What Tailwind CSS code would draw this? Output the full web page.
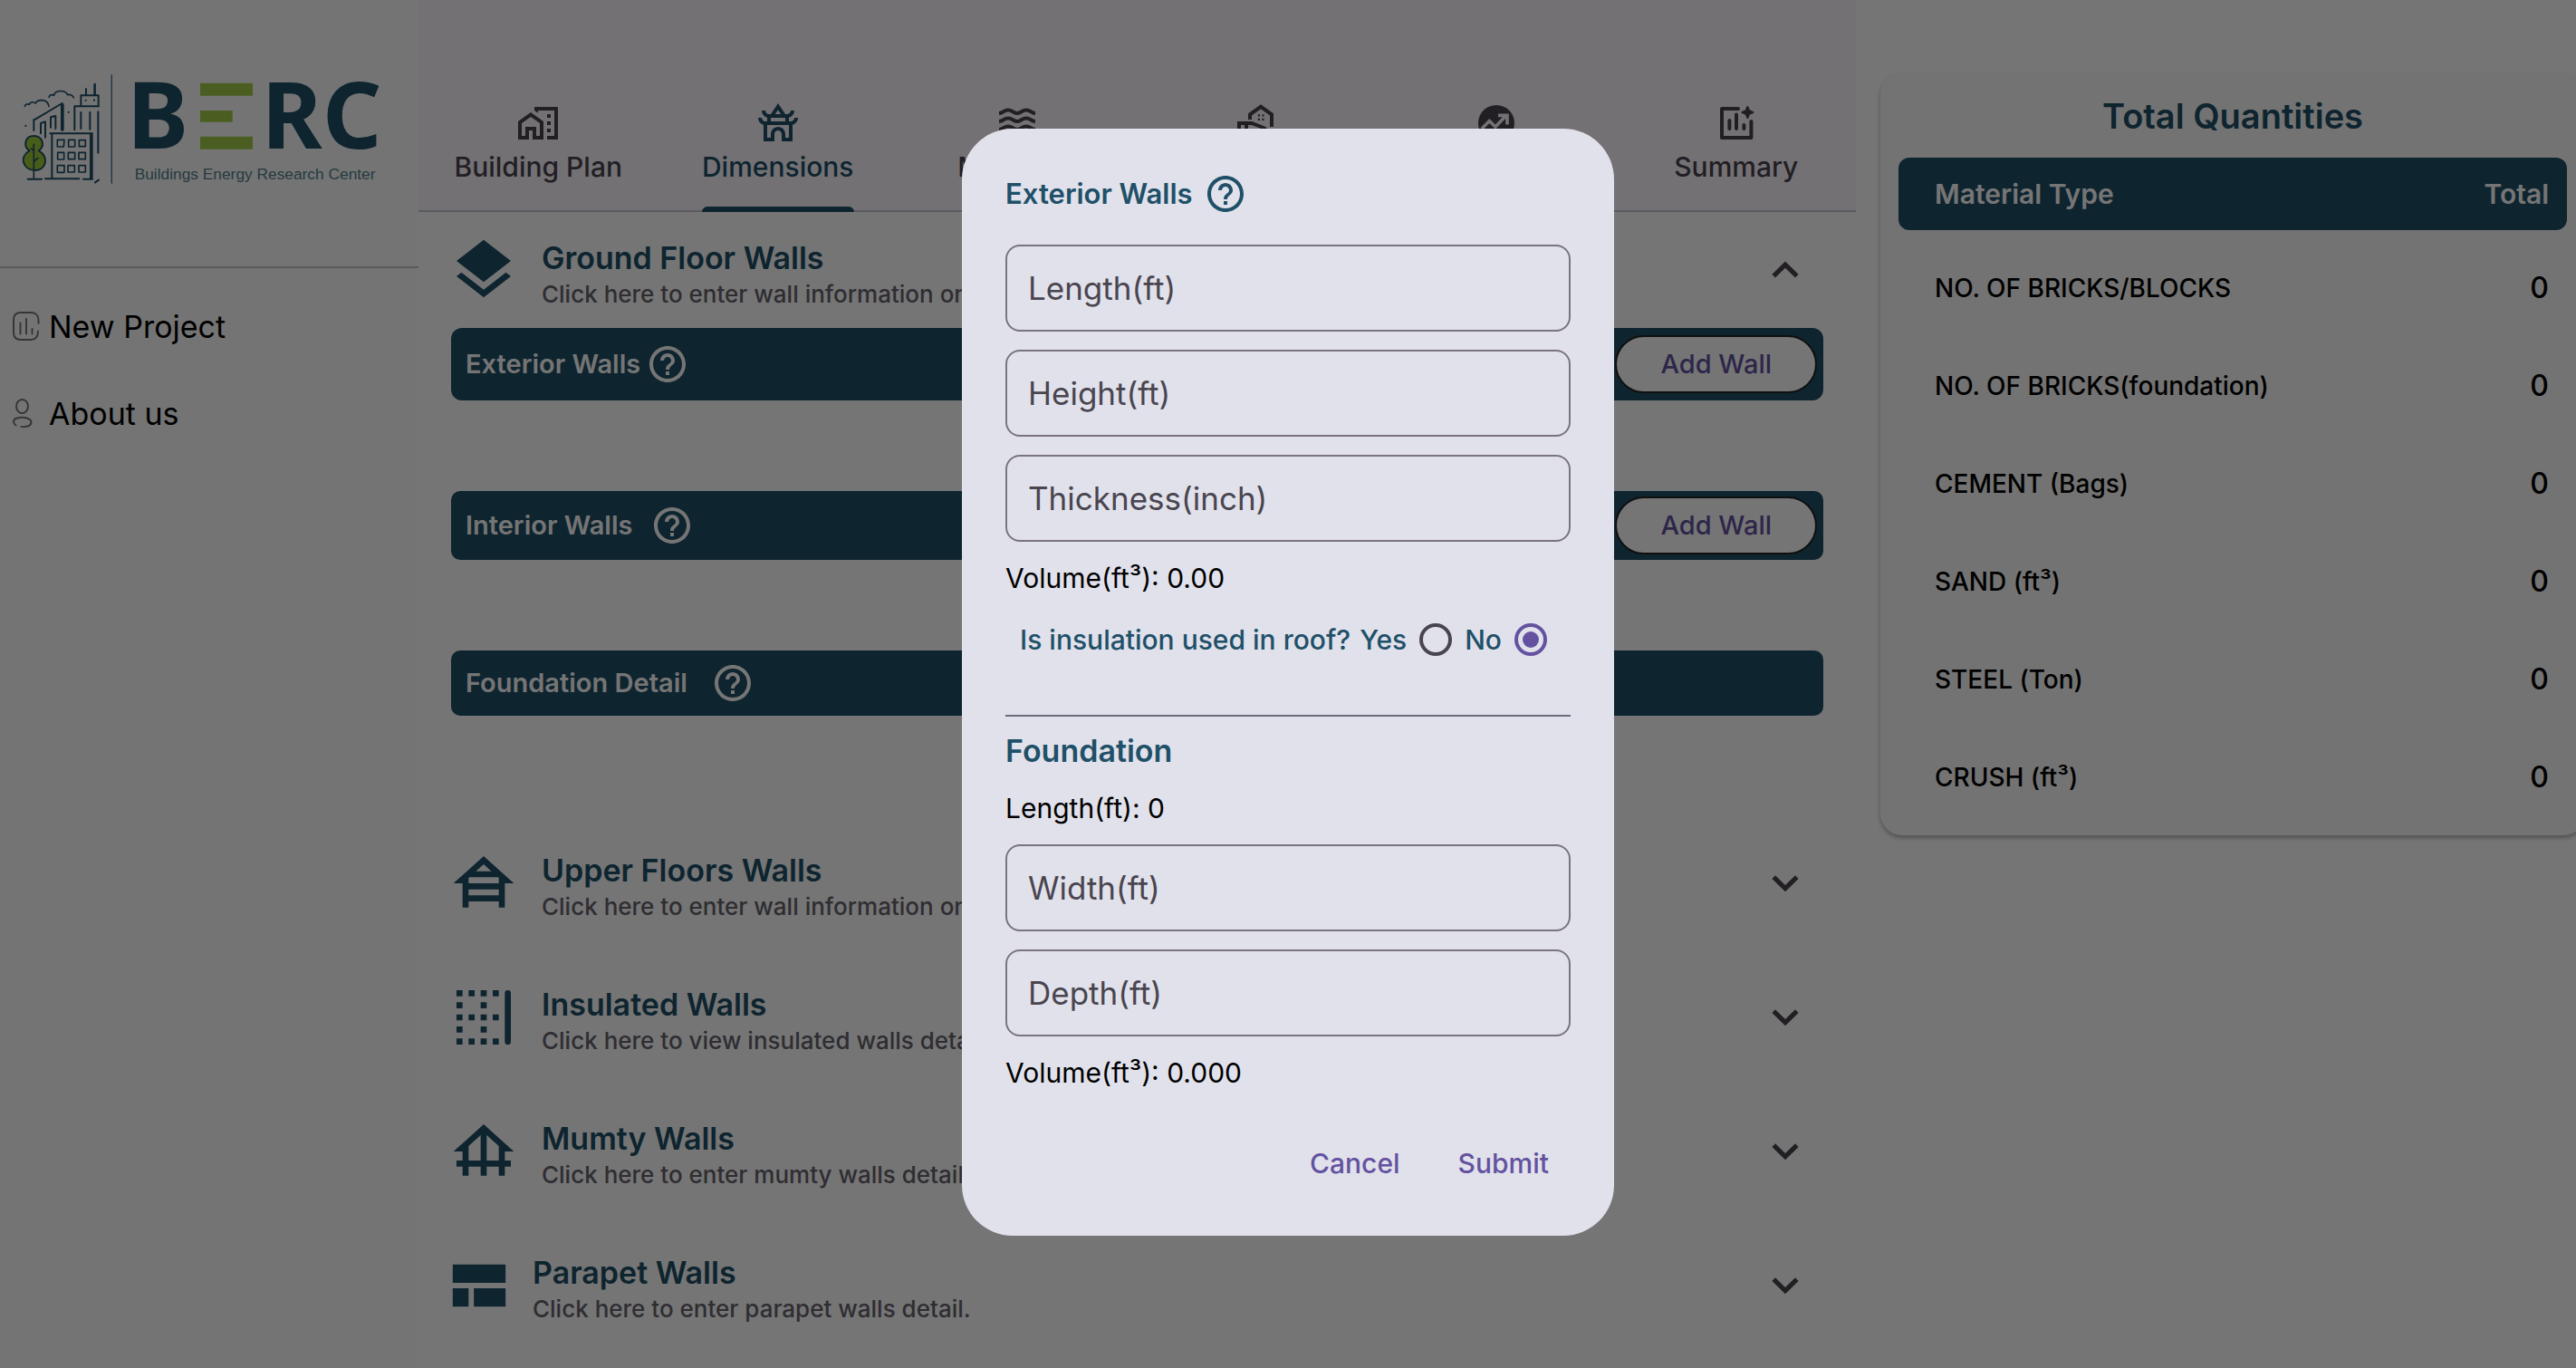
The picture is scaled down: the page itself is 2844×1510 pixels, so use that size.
<!DOCTYPE html>
<html lang="en">
<head>
<meta charset="utf-8">
<title>BERC - Dimensions</title>
<script src="https://cdn.jsdelivr.net/npm/@tailwindcss/browser@4"></script>
</head>
<body class="h-screen overflow-hidden bg-white font-['Inter','Open_Sans',sans-serif] text-black">

<svg class="hidden" aria-hidden="true">
  <symbol id="help" viewBox="0 0 24 24"><path d="M11 18h2v-2h-2v2zm1-16C6.480 2 2 6.480 2 12s4.480 10 10 10 10-4.480 10-10S17.520 2 12 2zm0 18c-4.410 0-8-3.590-8-8s3.590-8 8-8 8 3.590 8 8-3.590 8-8 8zm0-14c-2.210 0-4 1.790-4 4h2c0-1.100.9-2 2-2s2 .9 2 2c0 2-3 1.750-3 5h2c0-2.250 3-2.500 3-5 0-2.210-1.790-4-4-4z"/></symbol>
  <symbol id="down" viewBox="0 0 24 24"><path d="M5.600 8.600 12 14.800l6.400-6.200" fill="none" stroke="currentColor" stroke-width="2.600"/></symbol>
  <symbol id="up" viewBox="0 0 24 24"><path d="M5.600 15.300 12 9.100l6.400 6.200" fill="none" stroke="currentColor" stroke-width="2.600"/></symbol>
</svg>

<div class="flex h-screen">

  <!-- Sidebar -->
  <aside class="w-[462px] shrink-0 bg-[#fdfdfd]">
    <div class="h-[296px] border-b-2 border-[#cac4d0] pt-20">
      <svg class="h-[125px] w-[430px]" viewBox="0 60 1290 375" role="img" aria-label="BERC Buildings Energy Research Center">
        <g fill="none" stroke="#205068" stroke-width="6" stroke-linecap="round" stroke-linejoin="round">
          <path d="M82 172c2-8 9-9 15-6 3-9 14-10 20-4 8-14 40-16 45 10M162 142c3-9 10-10 16-6 6-20 40-18 46-2 8-3 18 2 20 9" stroke-width="5"/>
          <path d="M112 252V218L206 162V252M112 218v-2M204 166v84M209 166v84"/>
          <path d="M135 262v-34l15-5v52M168 242v-34l16-4v42"/>
          <path d="M247 250V172h80M268 170v-34h58v34M285 132v-18M313 134V100M268 192v54M298 192v56M325 190v136"/>
          <path d="M315 98v36" stroke-width="5"/>
          <path d="M172 408V262h133v150M166 262h140M300 266v144M305 266v144M92 413h46M150 412h112M276 413h30M315 424l12-8"/>
          <path d="M190 283h23l-2 23h-21zM227 283h21v23h-21zM262 284h21v21h-21zM191 325h21v23h-21zM226 325h22v22h-22zM261 325h22v22h-22zM190 368h23v23h-23zM225 368h22v22h-22zM261 368h22v22h-22z" stroke-width="5"/>
          <path d="M85 236v1M227 191v1M284 152v1M312 151v1"/>
          <path d="M98 319c-24-16-14-49 14-49s40 33 16 49c34 16 28 65-12 65s-54-46-18-65z" fill="#9fcb3b"/>
          <path d="M112 412V298M112 320l-8-8M112 355l14-12" stroke-width="5"/>
          <path d="M370 68v358" stroke-width="4" stroke="#3d7288"/>
        </g>
        <g fill="#205068" font-family="'Noto Sans','Open Sans',sans-serif" font-weight="700" font-size="306">
          <text x="421" y="311">B</text><text x="866" y="311">R</text><text x="1068" y="311">C</text>
        </g>
        <path d="M663 95h174v42H663zM663 186h107v38H663zM663 272h174v42H663z" fill="#a3cd4b"/>
        <text x="446" y="414" fill="#52808c" font-family="'Liberation Sans',sans-serif" font-size="52">Buildings Energy Research Center</text>
      </svg>
    </div>
    <nav class="mt-4 text-[34px]">
      <a href="#" class="flex h-24 items-center gap-[10px] pl-[14px]">
        <svg class="h-8 w-[30px]" viewBox="0 0 30 32" fill="none" stroke="#777" stroke-width="2" stroke-linecap="round"><path d="M28 21.500c0 6-3 9.500-8 9.500H9c-5 0-8-3-8-8V9c0-5 3-8 8-8h11c5 0 8.500 3 8.500 8v4M8.500 12.500v12M15 8v16.500M21.500 19v5.500"/></svg>New Project</a>
      <a href="#" class="flex h-24 items-center gap-[10px] pl-[14px]">
        <svg class="h-8 w-[30px]" viewBox="0 0 30 32" fill="none" stroke="#777" stroke-width="2" stroke-linecap="round"><ellipse cx="7.500" cy="8.500" rx="6.500" ry="7.500" transform="translate(3)"/><path d="M3.500 29.500C0 27 0 22.500 5 21.500c4-1 8-1 12 .5 5 2 4.500 7-.5 8.500-2 .6-5 .8-7 .5"/></svg>About us</a>
    </nav>
  </aside>

  <!-- Main column -->
  <main class="min-w-0 flex-1">
    <nav class="grid h-[234px] grid-cols-6 border-b-2 border-[#cac4d0] bg-[#fdf7fe] text-[30px] leading-10 font-medium text-[#49454f]">
      <button class="flex flex-col items-center justify-end gap-1 pb-7">
        <svg class="size-12" viewBox="0 0 24 24" fill="currentColor"><path fill-rule="evenodd" d="M1 11v10h6v-5h2v5h6V11L8 6zM13 19h-2v-5H5v5H3v-7l5-3.500 5 3.500zM17 7h2v2h-2zM17 11h2v2h-2zM17 15h2v2h-2zM10 3v1.970l2 1.430V5h9v14h-4v2h6V3z"/></svg>
        Building Plan</button>
      <button class="flex justify-center text-[#205068]">
        <span class="relative -mb-[2px] flex h-[234px] flex-col items-center justify-end gap-1 pb-[30px]">
          <svg class="size-12" viewBox="0 0 24 24" fill="currentColor"><path fill-rule="evenodd" d="M21 9.020c0 1.090-.89 1.980-1.980 1.980H4.980C3.890 11 3 10.110 3 9.020H1c0 1.860 1.280 3.400 3 3.840V22h6v-4c0-1.100.9-2 2-2s2 .9 2 2v4h6v-9.140c.55-.14 3-1.040 3-3.860zM6 13v7h2v-2c0-2.200 1.800-4 4-4s4 1.800 4 4v2h2v-7zM6 8.860V11h12V8.860c.55-.14 3-1.040 3-3.860l-2 .02C19 6.110 18.110 7 17.020 7h-1.030L12 1 8.020 7H6.980C5.890 7 5 6.110 5 5.020H3c0 1.860 1.280 3.400 3 3.840zM8 9h8v2H8zM12 4.600 13.600 7h-3.200z"/></svg>
          Dimensions
          <span class="absolute inset-x-0 bottom-0 h-[6px] rounded-t-[6px] bg-[#205068]"></span>
        </span></button>
      <button class="flex flex-col items-center justify-end gap-1 pb-7">
        <svg class="size-12" viewBox="0 0 24 24" fill="none" stroke="currentColor" stroke-width="2"><path d="M2 6.500C4.500 6.500 4.500 4.700 7 4.700S9.500 6.500 12 6.500 14.500 4.700 17 4.700 19.500 6.500 22 6.500M2 11C4.500 11 4.500 9.200 7 9.200S9.500 11 12 11s2.500-1.800 5-1.800S19.500 11 22 11M2 15.500c2.500 0 2.500-1.800 5-1.800s2.500 1.800 5 1.800 2.500-1.800 5-1.800 2.500 1.800 5 1.800M2 20c2.500 0 2.500-1.800 5-1.800S9.500 20 12 20s2.500-1.800 5-1.800S19.500 20 22 20"/></svg>
        Materials</button>
      <button class="flex flex-col items-center justify-end pb-[72px]" aria-label="Real estate">
        <svg class="size-12" viewBox="0 0 24 24" fill="none" stroke="currentColor" stroke-width="2"><path d="M8 10V7.200L14 2.900l6 4.300V14M2 22V12h7l6.500 2.500c1.500.6 1.800 3-.5 3h-3l-2-.7M6 12v9l8 2 8-3"/><path d="M12.400 7.100h1.100v1.100h-1.100zM14.700 7.100h1.100v1.100h-1.100zM12.400 9.400h1.100v1.100h-1.100zM14.700 9.400h1.100v1.100h-1.100z" fill="currentColor" stroke="none"/></svg></button>
      <button class="flex flex-col items-center justify-end pb-[72px]" aria-label="Trends">
        <svg class="size-12" viewBox="0 0 24 24" fill="none"><circle cx="12" cy="12" r="10" fill="currentColor"/><path d="M4 15l4.200-4.200 3.300 3.200L17 8.300M13 7.700h5v5" stroke="#fdf7fe" stroke-width="1.800"/></svg></button>
      <button class="flex flex-col items-center justify-end gap-1 pb-7">
        <svg class="size-12" viewBox="0 0 24 24" fill="none" stroke="currentColor" stroke-width="2" stroke-linecap="round" stroke-linejoin="round"><path d="M13 4H4v16h16.200V11M8.200 10.500V15M12 7.200V15M16.200 13v2"/><path d="M18.200 3l.9 2.100 2.100.9-2.100.9-.9 2.100-.9-2.100-2.100-.9 2.100-.9z" fill="currentColor" stroke-width="1"/></svg>
        Summary</button>
    </nav>

    <section>
      <button class="flex h-32 w-full items-center pr-[54px] pl-8 text-left">
        <svg class="mr-6 size-20 shrink-0 text-[#205068]" viewBox="0 0 24 24" fill="currentColor"><path d="M11.990 18.540l-7.370-5.730L3 14.070l9 7 9-7-1.630-1.270zM12 16l7.360-5.730L21 9l-9-7-9 7 1.630 1.270z"/></svg>
        <span class="flex-1 pt-3">
          <span class="block text-[34px] leading-[42px] font-semibold text-[#205068]">Ground Floor Walls</span>
          <span class="block text-[26px] leading-[38px] font-medium text-[#67636e]">Click here to enter wall information on ground floor.</span>
        </span>
        <svg class="size-12 text-[#49454f]" fill="currentColor"><use href="#up"/></svg>
      </button>

      <div class="flex flex-col gap-[100px] px-9 pb-[111px] text-[29px] font-semibold text-white">
        <div class="flex h-20 items-center rounded-xl bg-[#205068] pr-[7px] pl-4">
          Exterior Walls
          <svg class="ml-[6px] size-12" fill="currentColor"><use href="#help"/></svg>
          <button class="ml-auto h-16 rounded-full border-2 border-[#222] bg-white px-12 text-[29px] font-medium text-[#6452a0]">Add Wall</button>
        </div>
        <div class="flex h-[76px] items-center rounded-[10px] bg-[#205068] pr-[7px] pl-4">
          Interior Walls
          <svg class="ml-5 size-12" fill="currentColor"><use href="#help"/></svg>
          <button class="ml-auto h-16 rounded-full border-2 border-[#222] bg-white px-12 text-[29px] font-medium text-[#6452a0]">Add Wall</button>
        </div>
        <div class="flex h-[72px] items-center rounded-[10px] bg-[#205068] pl-4">
          Foundation Detail
          <svg class="ml-[26px] size-12" fill="currentColor"><use href="#help"/></svg>
        </div>
      </div>
    </section>

    <button class="flex h-[148px] w-full items-center pr-[54px] pl-8 text-left">
      <svg class="mr-6 size-20 shrink-0 text-[#205068]" viewBox="0 0 24 24" fill="currentColor"><path fill-rule="evenodd" d="M19 12h3L12 3 2 12h3v8h2v-2h10v2h2zM7.210 10h9.580l.21.190V12H7v-1.810zM14.570 8H9.430L12 5.690zM7 16v-2h10v2z"/></svg>
      <span class="flex-1 pt-[10px]">
        <span class="block text-[34px] leading-[42px] font-semibold text-[#205068]">Upper Floors Walls</span>
        <span class="block text-[26px] leading-[38px] font-medium text-[#67636e]">Click here to enter wall information on upper floors.</span>
      </span>
      <svg class="size-12 text-[#49454f]" fill="currentColor"><use href="#down"/></svg>
    </button>
    <button class="flex h-[148px] w-full items-center pr-[54px] pl-8 text-left">
      <svg class="mr-6 size-20 shrink-0 text-[#205068]" viewBox="0 0 24 24" fill="currentColor"><path d="M3 3h2v2H3zM7 3h2v2H7zM11 3h2v2h-2zM15 3h2v2h-2zM3 7h2v2H3zM11 7h2v2h-2zM3 11h2v2H3zM7 11h2v2H7zM11 11h2v2h-2zM15 11h2v2h-2zM3 15h2v2H3zM11 15h2v2h-2zM3 19h2v2H3zM7 19h2v2H7zM11 19h2v2h-2zM15 19h2v2h-2z"/><rect x="19" y="3" width="2" height="18" rx="1"/></svg>
      <span class="flex-1 pt-[10px]">
        <span class="block text-[34px] leading-[42px] font-semibold text-[#205068]">Insulated Walls</span>
        <span class="block text-[26px] leading-[38px] font-medium text-[#67636e]">Click here to view insulated walls detail.</span>
      </span>
      <svg class="size-12 text-[#49454f]" fill="currentColor"><use href="#down"/></svg>
    </button>
    <button class="flex h-[148px] w-full items-center pr-[54px] pl-8 text-left">
      <svg class="mr-6 size-20 shrink-0 text-[#205068]" viewBox="0 0 24 24" fill="currentColor"><path fill-rule="evenodd" d="M19 12h3L12 3 2 12h3v3H3v2h2v3h2v-3h4v3h2v-3h4v3h2v-3h2v-2h-2zM7 15v-4.810l4-3.600V15zM13 15V6.590l4 3.600V15z"/></svg>
      <span class="flex-1 pt-[10px]">
        <span class="block text-[34px] leading-[42px] font-semibold text-[#205068]">Mumty Walls</span>
        <span class="block text-[26px] leading-[38px] font-medium text-[#67636e]">Click here to enter mumty walls detail.</span>
      </span>
      <svg class="size-12 text-[#49454f]" fill="currentColor"><use href="#down"/></svg>
    </button>
    <button class="flex h-[148px] w-full items-center pr-[54px] pl-8 text-left">
      <svg class="mr-6 size-[70px] shrink-0 text-[#205068]" viewBox="0 0 24 24" fill="currentColor"><path d="M2 4h20v7H2zM2 13h6v7H2zM10 13h12v7H10z"/></svg>
      <span class="flex-1 pt-[10px]">
        <span class="block text-[34px] leading-[42px] font-semibold text-[#205068]">Parapet Walls</span>
        <span class="block text-[26px] leading-[38px] font-medium text-[#67636e]">Click here to enter parapet walls detail.</span>
      </span>
      <svg class="size-12 text-[#49454f]" fill="currentColor"><use href="#down"/></svg>
    </button>
  </main>

  <!-- Totals -->
  <aside class="w-[795px] shrink-0 pt-[81px] pl-[27px]">
    <div class="-mr-[10px] rounded-3xl bg-[#fafafa] px-5 pb-[10px] shadow-[0_3px_5px_rgba(0,0,0,0.3)]">
      <h2 class="h-[93px] pt-5 text-center text-[38px] leading-[54px] font-semibold text-[#205068]">Total Quantities</h2>
      <table class="w-full border-separate border-spacing-0 text-[28px] font-medium">
        <thead>
          <tr class="h-20 text-[30px] text-white">
            <th class="rounded-l-xl bg-[#205068] pl-10 text-left font-semibold">Material Type</th>
            <th class="rounded-r-xl bg-[#205068] pr-5 text-right font-semibold">Total</th>
          </tr>
        </thead>
        <tbody class="before:block before:h-[10px]">
          <tr class="h-[108px]"><td class="pl-10">NO. OF BRICKS/BLOCKS</td><td class="pr-5 text-right text-[32px]">0</td></tr>
          <tr class="h-[108px]"><td class="pl-10">NO. OF BRICKS(foundation)</td><td class="pr-5 text-right text-[32px]">0</td></tr>
          <tr class="h-[108px]"><td class="pl-10">CEMENT (Bags)</td><td class="pr-5 text-right text-[32px]">0</td></tr>
          <tr class="h-[108px]"><td class="pl-10">SAND (ft³)</td><td class="pr-5 text-right text-[32px]">0</td></tr>
          <tr class="h-[108px]"><td class="pl-10">STEEL (Ton)</td><td class="pr-5 text-right text-[32px]">0</td></tr>
          <tr class="h-[108px]"><td class="pl-10">CRUSH (ft³)</td><td class="pr-5 text-right text-[32px]">0</td></tr>
        </tbody>
      </table>
    </div>
  </aside>
</div>

<!-- Modal -->
<div class="fixed inset-0 flex items-center justify-center bg-black/54 pb-1">
  <form class="w-[720px] rounded-[56px] bg-[#e1e1eb] p-12 text-[30px] leading-10 font-medium" role="dialog" aria-labelledby="dialog-title">
    <div class="flex h-12 items-center gap-3 text-[#205068]">
      <h2 id="dialog-title" class="text-[31px] font-semibold">Exterior Walls</h2>
      <svg class="size-12" fill="currentColor"><use href="#help"/></svg>
    </div>
    <div class="mt-8 flex flex-col gap-5">
      <label class="sr-only" for="len">Length(ft)</label>
      <input id="len" placeholder="Length(ft)" class="h-24 rounded-2xl border-2 border-[#79747e] px-[23px] text-[35px] font-normal placeholder:text-[#49454f]">
      <label class="sr-only" for="hei">Height(ft)</label>
      <input id="hei" placeholder="Height(ft)" class="h-24 rounded-2xl border-2 border-[#79747e] px-[23px] text-[35px] font-normal placeholder:text-[#49454f]">
      <label class="sr-only" for="thi">Thickness(inch)</label>
      <input id="thi" placeholder="Thickness(inch)" class="h-24 rounded-2xl border-2 border-[#79747e] px-[23px] text-[35px] font-normal placeholder:text-[#49454f]">
      <p class="font-normal">Volume(ft³): 0.00</p>
    </div>
    <fieldset class="flex h-24 items-center pl-4 text-[#205068]">
      <span class="mr-[10px]">Is insulation used in roof?</span>
      <label class="mr-[14px] flex items-center gap-[14px]">Yes
        <input type="radio" name="ins" class="size-9 appearance-none rounded-full border-4 border-[#49454f]"></label>
      <label class="flex items-center gap-[14px]">No
        <input type="radio" name="ins" checked class="size-9 appearance-none rounded-full border-4 border-[#6452a0] bg-[#6452a0] bg-clip-content p-[5px]"></label>
    </fieldset>
    <hr class="mt-[35px] border-t-2 border-[#6b6c7a]">
    <h3 class="mt-4 h-11 text-[34px] leading-[44px] font-semibold text-[#205068]">Foundation</h3>
    <div class="mt-[21px] flex flex-col gap-5">
      <p class="font-normal">Length(ft): 0</p>
      <label class="sr-only" for="wid">Width(ft)</label>
      <input id="wid" placeholder="Width(ft)" class="h-24 rounded-2xl border-2 border-[#79747e] px-[23px] text-[35px] font-normal placeholder:text-[#49454f]">
      <label class="sr-only" for="dep">Depth(ft)</label>
      <input id="dep" placeholder="Depth(ft)" class="h-24 rounded-2xl border-2 border-[#79747e] px-[23px] text-[35px] font-normal placeholder:text-[#49454f]">
      <p class="font-normal">Volume(ft³): 0.000</p>
    </div>
    <div class="mt-12 flex justify-end gap-4 text-[30px] text-[#6452a0]">
      <button type="button" class="h-16 rounded-full px-6">Cancel</button>
      <button type="submit" class="h-16 rounded-full px-6">Submit</button>
    </div>
  </form>
</div>
</body>
</html>
